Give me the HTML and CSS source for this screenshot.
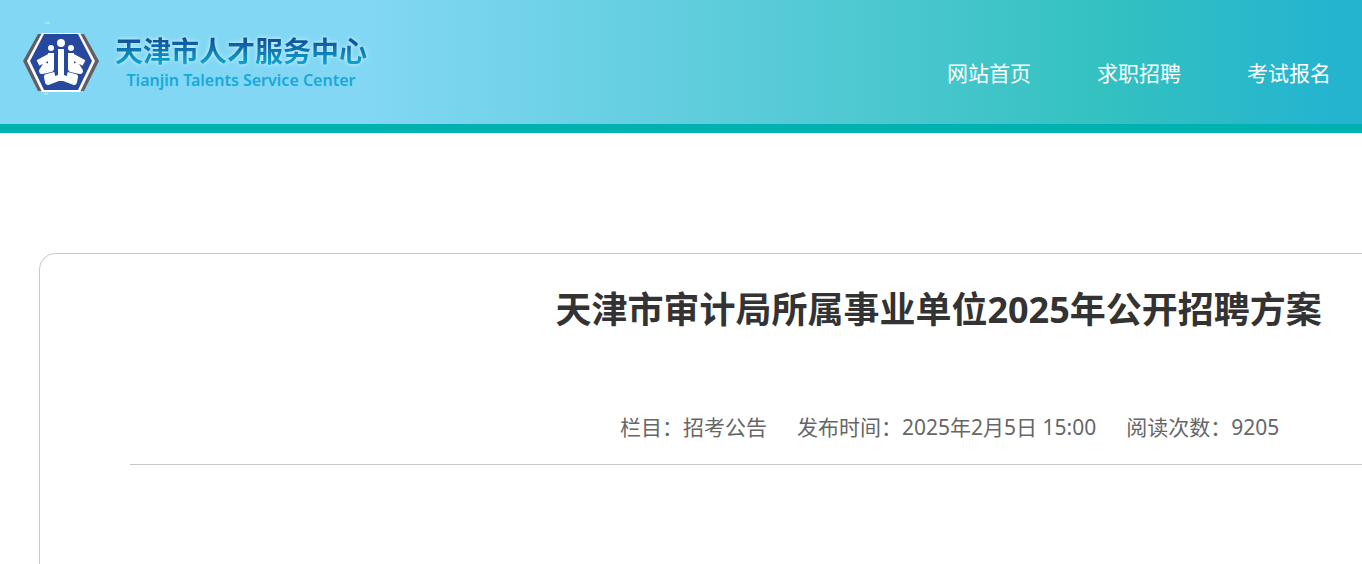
FILE: index.html
```
<!DOCTYPE html>
<html lang="zh-CN">
<head>
    <meta charset="UTF-8">
    <meta name="viewport" content="width=device-width, initial-scale=1.0">
    <title>天津市审计局所属事业单位2025年公开招聘方案</title>
    <link rel="stylesheet" href="styles.css">
</head>
<body>
    <header class="header">
        <a class="logo" href="#">
            <svg class="logo-mark" viewBox="0 0 76 74" width="76" height="74" aria-hidden="true">
                <path d="M15 12H61L76 39L61 69H15L0 39Z" fill="#625e63"/>
                <path d="M19 11H57L72 39L57 70H19L4 39Z" fill="#fff"/>
                <path d="M21 12H55L69 39L55 68H21L7 39Z" fill="#27489f"/>
                <path d="M22 1h5M21 72h4" stroke="#d5f3fc" stroke-width="1"/>
                <g fill="#fff">
                    <circle cx="38" cy="21" r="4"/>
                    <circle cx="28" cy="26" r="3"/>
                    <circle cx="48" cy="26" r="3"/>
                </g>
                <g fill="none" stroke="#fff" stroke-width="6" stroke-linejoin="round">
                    <path d="M38 27V58"/>
                    <path d="M28 31V47L19 49L24 41M28 34L15 41"/>
                    <path d="M48 31V47L57 49L52 41M48 34L61 41"/>
                    <path d="M38 55L25 60L24 55L32 53M38 55L51 60L52 55L44 53"/>
                </g>
            </svg>
            <span class="logo-text">
                <span class="logo-cn">天津市人才服务中心</span>
                <span class="logo-en">Tianjin Talents Service Center</span>
            </span>
        </a>
        <nav class="nav">
            <a href="#">网站首页</a>
            <a href="#">求职招聘</a>
            <a href="#">考试报名</a>
        </nav>
    </header>
    <main class="container">
        <article class="article">
            <h1>天津市审计局所属事业单位2025年公开招聘方案</h1>
            <div class="info">
                <span>栏目：招考公告</span>
                <span>发布时间：2025年2月5日 15:00</span>
                <span>阅读次数：9205</span>
            </div>
        </article>
    </main>
</body>
</html>
```
FILE: styles.css
```
body {
    margin: 0;
    font-family: "Noto Sans", "Noto Sans CJK SC", sans-serif;
    background: #fff;
    color: #333;
    overflow: hidden;
}
a {
    color: inherit;
    text-decoration: none;
}
.header {
    display: flex;
    justify-content: space-between;
    align-items: center;
    height: 124px;
    padding: 0 31px 0 23px;
    border-bottom: 9px solid #00b1b1;
    background: linear-gradient(to right, #82d7f4 0%, #82d7f4 27%, #34c1c0 81%, #24b4d0 98%);
}
.logo {
    display: flex;
    align-items: center;
    gap: 16px;
    padding-bottom: 6px;
}
.logo-mark {
    display: block;
}
.logo-text {
    display: flex;
    flex-direction: column;
    align-items: center;
    padding-top: 10px;
}
.logo-cn {
    font-size: 28px;
    font-weight: bold;
    line-height: 32px;
    color: transparent;
    background: linear-gradient(#10529b 15%, #0ba5cf 90%);
    -webkit-background-clip: text;
    background-clip: text;
    filter: drop-shadow(0 0 2px #e4f8ff);
}
.logo-en {
    font-size: 16px;
    font-weight: 600;
    line-height: 26px;
    color: #17a9dc;
}
.nav {
    display: flex;
    gap: 66px;
    padding-top: 22px;
    font-size: 21px;
    line-height: 32px;
    color: #fff;
}
.container {
    padding: 120px 0 0 39px;
}
.article {
    width: 136%;
    padding: 32px 90px 120px;
    box-sizing: border-box;
    border: 1px solid #c8c8c8;
    border-radius: 16px;
}
.article h1 {
    margin: 0;
    font-size: 36px;
    line-height: 48px;
    text-align: center;
}
.info {
    display: flex;
    justify-content: center;
    gap: 30px;
    margin-top: 64px;
    padding: 13px 0 21px 22px;
    border-bottom: 1px solid #c8c8c8;
    font-size: 21px;
    line-height: 32px;
    color: #666;
}
```
